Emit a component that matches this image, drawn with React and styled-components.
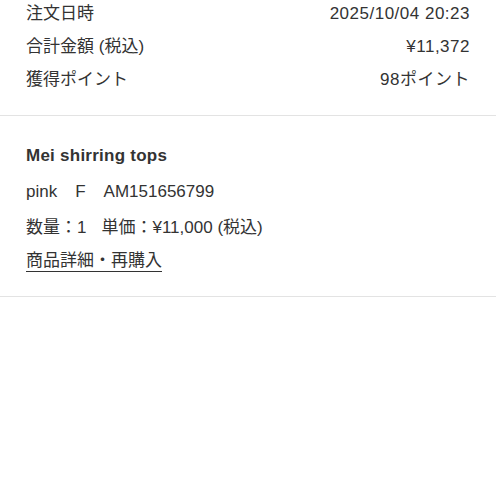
import React from 'react';
import styled, { createGlobalStyle } from 'styled-components';

const GlobalStyle = createGlobalStyle`
	body {
		margin: 0;
		background: #fff;
		font-family: 'Liberation Sans', 'Noto Sans CJK JP', sans-serif;
		color: #333;
	}
`;

const Page = styled.div`
	width: 496px;
	height: 496px;
	background: #fff;
`;

const Summary = styled.section`
	display: flex;
	flex-direction: column;
	gap: 9px;
	padding: 2px 26px 23px;
	border-bottom: 1px solid #e3e3e3;
`;

const Row = styled.div`
	display: flex;
	justify-content: space-between;
	align-items: center;
	font-size: 17px;
	line-height: 24px;
`;

const Value = styled.span`
	letter-spacing: 0.5px;
`;

const Item = styled.section`
	display: flex;
	flex-direction: column;
	gap: 12px;
	padding: 28px 26px 24px;
	border-bottom: 1px solid #e3e3e3;
`;

const Title = styled.h2`
	margin: 0;
	font-size: 17px;
	font-weight: 700;
	line-height: 24px;
	letter-spacing: 0.25px;
`;

const Line = styled.div`
	display: flex;
	gap: ${p => p.gap || 18}px;
	font-size: 17px;
	line-height: 24px;
`;

const Link = styled.a`
	align-self: flex-start;
	margin-top: -2px;
	font-size: 17px;
	line-height: 21px;
	color: #333;
	text-decoration: none;
	border-bottom: 1px solid #333;
`;

const App = () => (
	<Page>
		<GlobalStyle />
		<Summary>
			<Row><span>注文日時</span><Value>2025/10/04 20:23</Value></Row>
			<Row><span>合計金額 (税込)</span><Value>¥11,372</Value></Row>
			<Row><span>獲得ポイント</span><Value>98ポイント</Value></Row>
		</Summary>
		<Item>
			<Title>Mei shirring tops</Title>
			<Line>
				<span>pink</span>
				<span>F</span>
				<span>AM151656799</span>
			</Line>
			<Line gap={15}>
				<span>数量：1</span>
				<span>単価：¥11,000 (税込)</span>
			</Line>
			<Link href="#">商品詳細・再購入</Link>
		</Item>
	</Page>
);

export default App;
